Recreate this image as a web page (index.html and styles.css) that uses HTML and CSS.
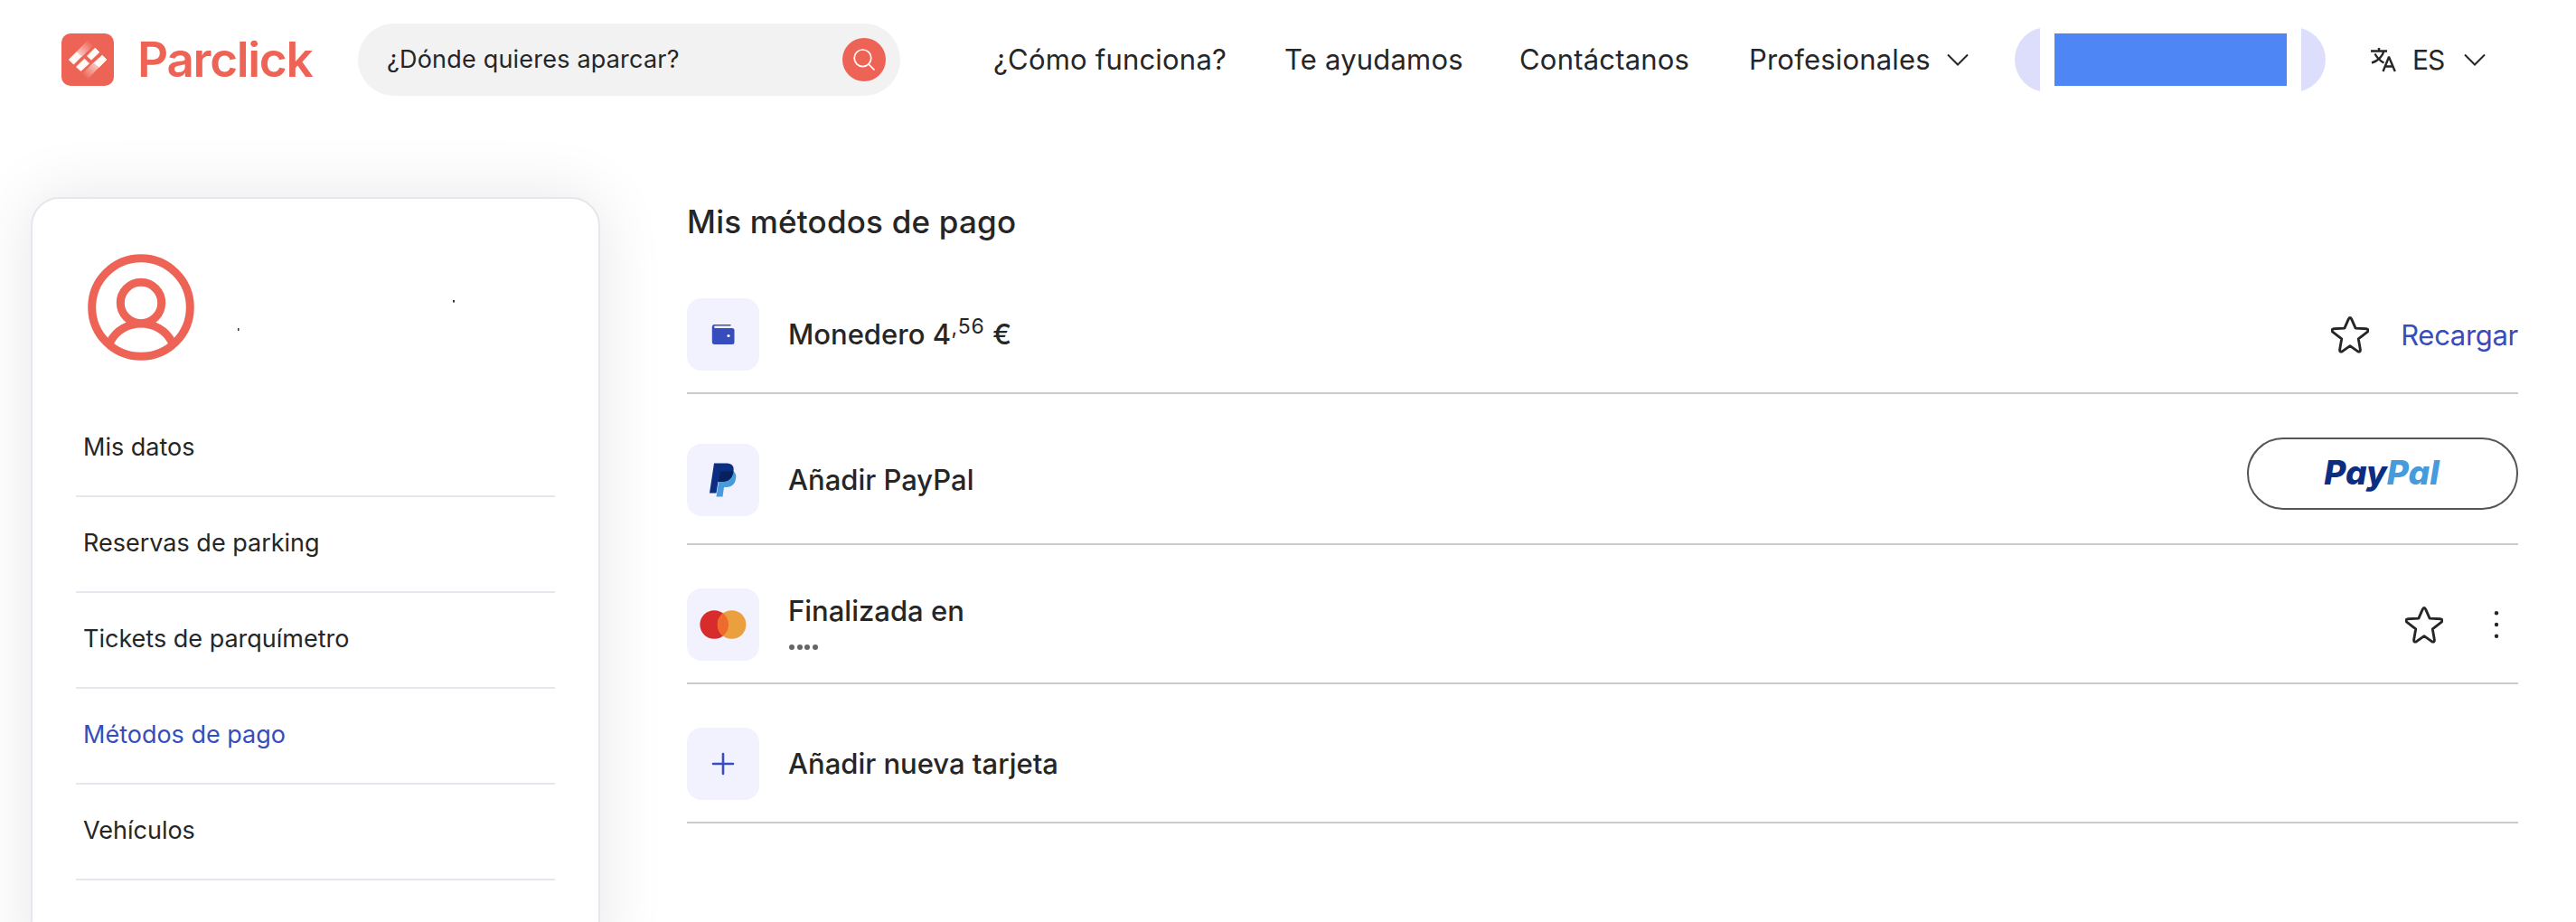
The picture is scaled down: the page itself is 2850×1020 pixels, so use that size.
FILE: index.html
```
<!DOCTYPE html>
<html lang="es">
<head>
    <meta charset="UTF-8">
    <meta name="viewport" content="width=device-width, initial-scale=1.0">
    <title>Parclick - Mis métodos de pago</title>
    <link rel="stylesheet" href="styles.css">
</head>
<body>
    <header class="header">
        <a class="logo" href="#">
            <svg class="logo-icon" viewBox="0 0 58 58">
                <defs>
                    <linearGradient id="fade-up" gradientUnits="userSpaceOnUse" x1="17" y1="26" x2="33" y2="10">
                        <stop offset="0" stop-color="#fffaf5" stop-opacity="0.8"/>
                        <stop offset="1" stop-color="#fffaf5" stop-opacity="0"/>
                    </linearGradient>
                    <linearGradient id="fade-down" gradientUnits="userSpaceOnUse" x1="41" y1="32" x2="25" y2="48">
                        <stop offset="0" stop-color="#fffaf5" stop-opacity="0.8"/>
                        <stop offset="1" stop-color="#fffaf5" stop-opacity="0"/>
                    </linearGradient>
                </defs>
                <rect width="58" height="58" rx="10" fill="#ed6457"/>
                <path d="M17 20l12-12.500 6 6-12.500 12.500z" fill="url(#fade-up)"/>
                <path d="M41 38l-12 12.500-6-6 12.500-12.500z" fill="url(#fade-down)"/>
                <g fill="#fffaf5" stroke="#fffaf5" stroke-linejoin="round">
                    <path d="M8.300 29l8.700-8.500 5 5-8.500 8.500z"/>
                    <path d="M16.500 37l9-8.800 5 5-9 8.300z"/>
                    <path d="M28.500 25l8.700-8.800 4.600 4.500-8.800 8.500z"/>
                    <path d="M36 32.500l9-8.200 5 4.700-8.700 8.500z"/>
                </g>
            </svg>
            <span class="logo-text">Parclick</span>
        </a>

        <div class="search">
            <span class="search-text">¿Dónde quieres aparcar?</span>
            <button class="search-btn" aria-label="Buscar">
                <svg width="48" height="48" viewBox="0 0 48 48" fill="none" stroke="#fff" stroke-width="1.700">
                    <circle cx="22.500" cy="22.300" r="9.300"/>
                    <path d="M29 29l6.500 6.500"/>
                </svg>
            </button>
        </div>

        <nav class="nav">
            <a href="#">¿Cómo funciona?</a>
            <a href="#">Te ayudamos</a>
            <a href="#">Contáctanos</a>
            <a href="#">Profesionales</a>
            <svg class="chevron" viewBox="0 0 24 14"><path d="M1 1.500l11 11 11-11"/></svg>
        </nav>

        <div class="account">
            <div class="account-inner">
                <div class="account-name"></div>
            </div>
        </div>

        <div class="lang">
            <svg class="lang-icon" viewBox="0 0 28 28">
                <path d="M0 4.500h18M9 1v3.500M14.500 4.500C13 10 8 15.500 1 17.500M4.500 7.500c2.500 4.500 5 7.500 10 10M13.500 27l6.300-15.500h.4L26.800 27M16 21.500h8.500"/>
            </svg>
            <span>ES</span>
            <svg class="chevron" viewBox="0 0 24 14"><path d="M1 1.500l11 11 11-11"/></svg>
        </div>
    </header>

    <div class="page">
        <aside class="sidebar">
            <div class="profile">
                <svg width="118" height="118" viewBox="0 0 118 118" fill="none" stroke="#ed6457" stroke-width="9">
                    <circle cx="59" cy="59" r="54.300"/>
                    <circle cx="59" cy="54" r="22.700"/>
                    <path d="M25 97c7-13 20-20 34-20s27 7 34 20"/>
                </svg>
                <svg class="profile-name" width="260" height="118" viewBox="0 0 260 118" fill="#333">
                    <rect x="3" y="82" width="1.500" height="3"/>
                    <rect x="241" y="51" width="2" height="2.500"/>
                </svg>
            </div>
            <ul class="menu">
                <li><a href="#">Mis datos</a></li>
                <li><a href="#">Reservas de parking</a></li>
                <li><a href="#">Tickets de parquímetro</a></li>
                <li class="active"><a href="#">Métodos de pago</a></li>
                <li><a href="#">Vehículos</a></li>
            </ul>
        </aside>

        <main class="content">
            <h1>Mis métodos de pago</h1>

            <div class="method">
                <div class="method-icon">
                    <svg width="26" height="24" viewBox="0 0 26 24">
                        <path d="M4 1h17.500v1.500H4a1.300 1.300 0 0 0 0 2.500h19a2.500 2.500 0 0 1 2.500 2.500v13A2.500 2.500 0 0 1 23 23H3.500A2.700 2.700 0 0 1 .8 20.300V4A3 3 0 0 1 4 1z" fill="#374dbd"/>
                        <circle cx="19" cy="13.500" r="1.600" fill="#fff"/>
                    </svg>
                </div>
                <div class="method-name">Monedero <span class="amount">4<small>,</small><sup>56</sup> €</span></div>
                <div class="method-actions">
                    <svg class="star" viewBox="0 0 44 44"><path d="M20.300 4.100q1.700-3 3.400 0l4.700 10.700 12.800.7q3.300.8 1 3.400l-10.500 8.200 2.200 12.500q.2 3.300-2.700 2.200L22 35.200l-9.200 6.600q-2.900 1.100-2.700-2.200l2.200-12.500L1.800 18.900q-2.300-2.600 1-3.400l12.800-.7z"/></svg>
                    <a class="link" href="#">Recargar</a>
                </div>
            </div>

            <div class="method method-paypal">
                <div class="method-icon">
                    <svg width="30" height="38" viewBox="0 0 30 38">
                        <path d="M12 9h14c3 2 4 5 3 9-1 6-5 9-11 9h-2l-1.500 10.500H7.500z" fill="#459bdb"/>
                        <path d="M5 .5h14c6 0 8.500 3.500 7.500 9-1.200 8-6 11.500-13 11.500h-4L7.500 33.500H0z" fill="#0c2e82"/>
                        <path d="M12 9.500h14.500c-1.200 8-6 11.500-13 11.500H10z" fill="#07205e"/>
                    </svg>
                </div>
                <div class="method-name">Añadir PayPal</div>
                <div class="method-actions">
                    <button class="paypal-btn"><span class="pay">Pay</span><span class="pal">Pal</span></button>
                </div>
            </div>

            <div class="method">
                <div class="method-icon">
                    <svg width="52" height="32" viewBox="0 0 52 32">
                        <circle cx="16.200" cy="16" r="15.800" fill="#d82c2c"/>
                        <circle cx="35.600" cy="16" r="15.800" fill="#eba03f"/>
                        <path d="M25.900 3.500a15.800 15.800 0 0 1 0 25 15.800 15.800 0 0 1 0-25z" fill="#ee6b2d"/>
                    </svg>
                </div>
                <div class="method-name">
                    Finalizada en
                    <div class="card-dots"><i></i><i></i><i></i><i></i></div>
                </div>
                <div class="method-actions">
                    <svg class="star" viewBox="0 0 44 44"><path d="M20.300 4.100q1.700-3 3.400 0l4.700 10.700 12.800.7q3.300.8 1 3.400l-10.500 8.200 2.200 12.500q.2 3.300-2.700 2.200L22 35.200l-9.200 6.600q-2.900 1.100-2.700-2.200l2.200-12.500L1.800 18.900q-2.300-2.600 1-3.400l12.800-.7z"/></svg>
                    <svg class="more" viewBox="0 0 48 48" fill="#262626">
                        <circle cx="24" cy="11.200" r="2.200"/>
                        <circle cx="24" cy="24" r="2.200"/>
                        <circle cx="24" cy="36.700" r="2.200"/>
                    </svg>
                </div>
            </div>

            <div class="method">
                <div class="method-icon">
                    <svg width="26" height="26" viewBox="0 0 26 26" stroke="#374dbd" stroke-width="2.600" stroke-linecap="round">
                        <path d="M13 2v22M2 13h22"/>
                    </svg>
                </div>
                <div class="method-name">Añadir nueva tarjeta</div>
            </div>
        </main>
    </div>
</body>
</html>
```
FILE: styles.css
```
* {
    box-sizing: border-box;
}

html {
    height: 100%;
    overflow: hidden;
}

body {
    margin: 0;
    height: 100%;
    overflow: hidden;
    background: #fff;
    color: #262626;
    font-family: Inter, "Liberation Sans", sans-serif;
    font-size: 31px;
}

a {
    color: inherit;
    text-decoration: none;
}

button {
    padding: 0;
    border: none;
    font-family: inherit;
}

/* Header */
.header {
    display: flex;
    align-items: center;
    height: 132px;
    padding-left: 68px;
}

.logo {
    display: flex;
    align-items: center;
    width: 328px;
}

.logo-icon {
    width: 58px;
    height: 58px;
}

.logo-text {
    margin-left: 26px;
    color: #ed6457;
    font-size: 53px;
    font-weight: 600;
    letter-spacing: -1.3px;
    line-height: 58px;
}

.search {
    display: flex;
    align-items: center;
    justify-content: space-between;
    width: 600px;
    height: 80px;
    padding: 0 16px 0 32px;
    border-radius: 40px;
    background: #f2f2f2;
    font-size: 27px;
    letter-spacing: 0.2px;
}

.search-text {
    padding-bottom: 2px;
}

.search-btn {
    width: 48px;
    height: 48px;
    border-radius: 50%;
    background: #ed6457;
}

.nav {
    display: grid;
    grid-template-columns: 322px 260px 254px 219px 24px;
    align-items: center;
    margin-left: 103px;
    letter-spacing: 0.2px;
}

.nav a {
    padding-bottom: 2px;
}

.chevron {
    width: 24px;
    height: 14px;
    fill: none;
    stroke: #262626;
    stroke-width: 2;
}

.account {
    display: flex;
    justify-content: center;
    width: 344px;
    height: 72px;
    margin-left: 51px;
    border-radius: 36px;
    background: #dddefc;
}

.account-inner {
    display: flex;
    align-items: center;
    justify-content: center;
    width: 289px;
    background: #fff;
}

.account-name {
    width: 257px;
    height: 58px;
    background: #4e87f5;
}

.lang {
    display: flex;
    align-items: center;
    margin-left: 50px;
    font-size: 30px;
    letter-spacing: -1px;
}

.lang-icon {
    width: 28px;
    height: 28px;
    margin-right: 18px;
    fill: none;
    stroke: #262626;
    stroke-width: 2.4;
}

.lang .chevron {
    margin-left: 22px;
}

/* Layout */
.page {
    display: flex;
    align-items: flex-start;
    height: calc(100% - 132px);
    padding: 86px 64px 0 34px;
    overflow: hidden;
}

.sidebar {
    width: 630px;
    height: 860px;
    padding: 61px 48px 0;
    border: 2px solid #e6e6ee;
    border-radius: 32px;
    background: #fff;
    box-shadow: 0 0 72px rgba(0, 0, 0, 0.1);
}

.profile {
    display: flex;
    gap: 45px;
    height: 163px;
    padding-left: 13px;
}

.menu {
    margin: 0;
    padding: 0;
    list-style: none;
    font-size: 27px;
}

.menu li {
    display: flex;
    align-items: center;
    height: 106px;
    padding: 0 0 3px 8px;
    border-bottom: 2px solid #e6e6ee;
}

.menu .active {
    color: #374dbd;
}

/* Payment methods */
.content {
    flex: 1;
    margin-left: 96px;
}

h1 {
    margin: 4px 0 49px;
    font-size: 35px;
    font-weight: 500;
    line-height: 46px;
    letter-spacing: 0.2px;
}

.method {
    display: flex;
    align-items: center;
    height: 154px;
    padding-top: 24px;
    border-bottom: 2px solid #cbcbcb;
}

h1 + .method {
    height: 119px;
    padding: 0 0 11px;
}

.method-paypal {
    height: 167px;
    padding-top: 25px;
}

.method-icon {
    display: flex;
    align-items: center;
    justify-content: center;
    width: 80px;
    height: 80px;
    margin-right: 32px;
    border-radius: 16px;
    background: #f2f2ff;
}

.method-name {
    font-weight: 500;
    line-height: 40px;
}

.amount {
    letter-spacing: 0.6px;
}

.amount small,
.amount sup {
    font-size: 23px;
    font-weight: 400;
    line-height: 0;
}

.amount small {
    vertical-align: 11px;
}

.amount sup {
    vertical-align: 12px;
}

.method-actions {
    display: flex;
    align-items: center;
    margin-left: auto;
}

.star {
    width: 42px;
    height: 42px;
    fill: none;
    stroke: #262626;
    stroke-width: 3;
    stroke-linejoin: round;
}

.link {
    margin-left: 35px;
    color: #374dbd;
    letter-spacing: -0.3px;
}

.paypal-btn {
    width: 300px;
    height: 80px;
    margin-bottom: 14px;
    padding: 0 2px 4px 0;
    border: 2px solid #555;
    border-radius: 40px;
    background: #fff;
    font-size: 37px;
    font-style: italic;
    font-weight: 800;
}

.pay {
    color: #0c2e82;
}

.pal {
    color: #459bdb;
}

.card-dots {
    display: flex;
    gap: 2.6px;
    padding: 17px 0 8px 1px;
}

.card-dots i {
    width: 6px;
    height: 6px;
    border-radius: 50%;
    background: #666;
}

.more {
    width: 48px;
    height: 48px;
    margin-left: 35px;
}
```
